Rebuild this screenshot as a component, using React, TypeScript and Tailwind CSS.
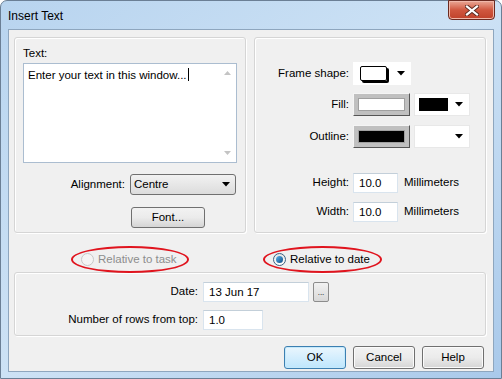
import React from "react";

const font = { fontFamily: '"Liberation Sans", Arial, sans-serif' };

function Caret() {
  return (
    <svg width="8" height="5" viewBox="0 0 8 5" className="shrink-0">
      <path d="M0 0h8L4 4.5z" fill="#000" />
    </svg>
  );
}

function GroupBox({ className, children }: { className?: string; children?: React.ReactNode }) {
  return (
    <div className={`rounded-[3px] border border-[#d5d5d5] shadow-[inset_1px_1px_0_#fff,1px_1px_0_#fff] ${className ?? ""}`}>
      {children}
    </div>
  );
}

function Button({ label, w, primary }: { label: string; w: string; primary?: boolean }) {
  return (
    <button
      className={`${w} h-[23px] rounded-[3px] border text-[11.5px] text-black ${
        primary
          ? "border-[#3c7fb1] bg-gradient-to-b from-[#eaf6fd] to-[#bee6fd] shadow-[inset_0_0_0_1px_#c5e9fb]"
          : "border-[#707070] bg-gradient-to-b from-[#f2f2f2] via-[#ebebeb] to-[#d5d5d5] shadow-[inset_0_0_0_1px_#fbfbfb]"
      }`}
    >
      {label}
    </button>
  );
}

function Input({ value, w }: { value: string; w: string }) {
  return (
    <div className={`${w} h-[20px] border border-[#d9e4ee] border-t-[#c3cfd9] bg-white pl-[5px] text-[11.5px] leading-[18px] text-black`}>
      {value}
    </div>
  );
}

function ColourButton({ swatch }: { swatch: string }) {
  return (
    <div className="flex h-[23px] w-[57px] items-center justify-center border border-t-[#f5f5f5] border-l-[#f5f5f5] border-r-[#555] border-b-[#555] bg-[#c0c0c0]">
      <div className={`h-[13px] w-[47px] border border-[#a0a0a0] ${swatch}`} />
    </div>
  );
}

function ColourDrop({ swatch }: { swatch?: boolean }) {
  return (
    <div className="flex h-[23px] w-[56px] items-center justify-between border border-[#e8e8e8] bg-white pl-[4px] pr-[6px]">
      {swatch ? <div className="h-[13px] w-[29px] bg-black" /> : <div />}
      <Caret />
    </div>
  );
}

function Radio({ label, checked, disabled }: { label: string; checked?: boolean; disabled?: boolean }) {
  return (
    <div className="relative flex h-[14px] w-fit items-center gap-[4px] text-[11.5px]">
      <span
        className={`flex h-[13px] w-[13px] items-center justify-center rounded-full border ${
          disabled ? "border-[#c8c8c8] bg-[#f4f4f4]" : "border-[#3c5f80] bg-gradient-to-b from-[#e4e4e4] to-white"
        }`}
      >
        {checked && <span className="h-[7px] w-[7px] rounded-full bg-gradient-to-br from-[#5ab3ee] to-[#0c4d84]" />}
      </span>
      <span className={disabled ? "text-[#8d8d8d]" : "text-black"}>{label}</span>
      <span className="pointer-events-none absolute left-[-10px] right-[-12px] top-[-7px] bottom-[-6px] rounded-[50%] border-2 border-[#e0141e]" />
    </div>
  );
}

export default function App() {
  return (
    <div style={font} className="h-[379px] w-[502px] overflow-hidden bg-white">
      <div className="flex h-[379px] w-[502px] flex-col rounded-t-[7px] border border-[#6b7f95] bg-gradient-to-br from-[#b8d4ef] via-[#cde2f5] to-[#a9c9ea] px-[7px] pb-[6px]">
        <div className="relative flex h-[28px] shrink-0 items-center">
          <span className="pt-[1px] text-[12px] text-black">Insert Text</span>
          <div className="absolute right-[-1px] top-[-1px] flex h-[20px] w-[47px] items-center justify-center rounded-b-[4px] border border-[#6b2a20] bg-gradient-to-b from-[#e9a796] via-[#d0573f] to-[#c0412a] shadow-[inset_0_0_0_1px_#f0b8aa]">
            <svg width="14" height="11" viewBox="0 0 14 11">
              <path d="M2 1.5l10 8M12 1.5l-10 8" stroke="#5a2a20" strokeWidth="4" strokeLinecap="square" />
              <path d="M2 1.5l10 8M12 1.5l-10 8" stroke="#fff" strokeWidth="2.2" strokeLinecap="square" />
            </svg>
          </div>
        </div>

        <div className="flex flex-1 flex-col border border-[#8ea6be] bg-[#f0f0f0] pl-[5px] pr-[7px] pt-[7px]">
          <div className="flex gap-[8px]">
            <GroupBox className="flex h-[196px] w-[233px] flex-col pl-[8px] pt-[7px]">
              <div className="text-[11.5px] leading-[16px] text-black">Text:</div>
              <div className="mt-[2px] flex h-[100px] w-[214px] border border-[#abbdd0] bg-white">
                <div className="flex-1 pl-[4px] pt-[3px] text-[11.5px] text-black">
                  Enter your text in this window...<span className="ml-[1px] inline-block h-[13px] w-px bg-black align-[-2px]" />
                </div>
                <div className="flex w-[17px] flex-col items-center justify-between py-[7px]">
                  <svg width="7" height="4" viewBox="0 0 7 4"><path d="M0 4h7L3.5 0z" fill="#c4c4c4" /></svg>
                  <svg width="7" height="4" viewBox="0 0 7 4"><path d="M0 0h7L3.5 4z" fill="#c4c4c4" /></svg>
                </div>
              </div>
              <div className="mt-[11px] flex items-center">
                <span className="w-[107px] pr-[5px] text-right text-[11.5px] text-black">Alignment:</span>
                <div className="flex h-[21px] w-[106px] items-center justify-between rounded-[3px] border border-[#707070] bg-gradient-to-b from-[#f2f2f2] to-[#dcdcdc] pl-[3px] pr-[5px] text-[11.5px] text-black">
                  Centre
                  <Caret />
                </div>
              </div>
              <div className="mt-[9px] pl-[108px]">
                <button className="h-[21px] w-[74px] rounded-[3px] border border-[#707070] bg-gradient-to-b from-[#f2f2f2] via-[#ebebeb] to-[#d5d5d5] text-[11.5px] text-black">
                  Font...
                </button>
              </div>
            </GroupBox>

            <GroupBox className="grid h-[196px] w-[233px] grid-cols-[94px_1fr] content-start items-center gap-x-[4px] pt-[24px] text-[11.5px] text-black">
              <span className="text-right">Frame shape:</span>
              <div className="flex h-[23px] w-[58px] items-center gap-[10px] bg-white pl-[7px]">
                <div className="h-[15px] w-[27px] rounded-[2px] border border-black shadow-[2px_2px_0_#000]" />
                <Caret />
              </div>
              <span className="mt-[8px] text-right">Fill:</span>
              <div className="mt-[8px] flex gap-[4px]">
                <ColourButton swatch="bg-white" />
                <ColourDrop swatch />
              </div>
              <span className="mt-[9px] text-right">Outline:</span>
              <div className="mt-[9px] flex gap-[4px]">
                <ColourButton swatch="bg-black" />
                <ColourDrop />
              </div>
              <span className="mt-[25px] text-right">Height:</span>
              <div className="mt-[25px] flex items-center gap-[6px]">
                <Input value="10.0" w="w-[45px]" />
                <span>Millimeters</span>
              </div>
              <span className="mt-[9px] text-right">Width:</span>
              <div className="mt-[9px] flex items-center gap-[6px]">
                <Input value="10.0" w="w-[45px]" />
                <span>Millimeters</span>
              </div>
            </GroupBox>
          </div>

          <div className="flex h-[39px] items-center pt-[14px]">
            <div className="ml-[67px] w-[192px]">
              <Radio label="Relative to task" disabled />
            </div>
            <Radio label="Relative to date" checked />
          </div>

          <GroupBox className="flex h-[64px] w-[472px] flex-col gap-[8px] pt-[9px] text-[11.5px] text-black">
            <div className="flex items-center">
              <span className="w-[188px] pr-[5px] text-right">Date:</span>
              <Input value="13 Jun 17" w="w-[106px]" />
              <div className="ml-[4px] flex h-[20px] w-[16px] items-end justify-center rounded-[2px] border border-[#8c8c8c] bg-gradient-to-b from-[#f2f2f2] to-[#d8d8d8] pb-[4px] text-[8px] leading-none">
                ...
              </div>
            </div>
            <div className="flex items-center">
              <span className="w-[188px] pr-[5px] text-right">Number of rows from top:</span>
              <Input value="1.0" w="w-[60px]" />
            </div>
          </GroupBox>

          <div className="mt-[10px] flex justify-end gap-[7px] pr-[2px]">
            <Button label="OK" w="w-[62px]" primary />
            <Button label="Cancel" w="w-[62px]" />
            <Button label="Help" w="w-[62px]" />
          </div>
        </div>
      </div>
    </div>
  );
}
